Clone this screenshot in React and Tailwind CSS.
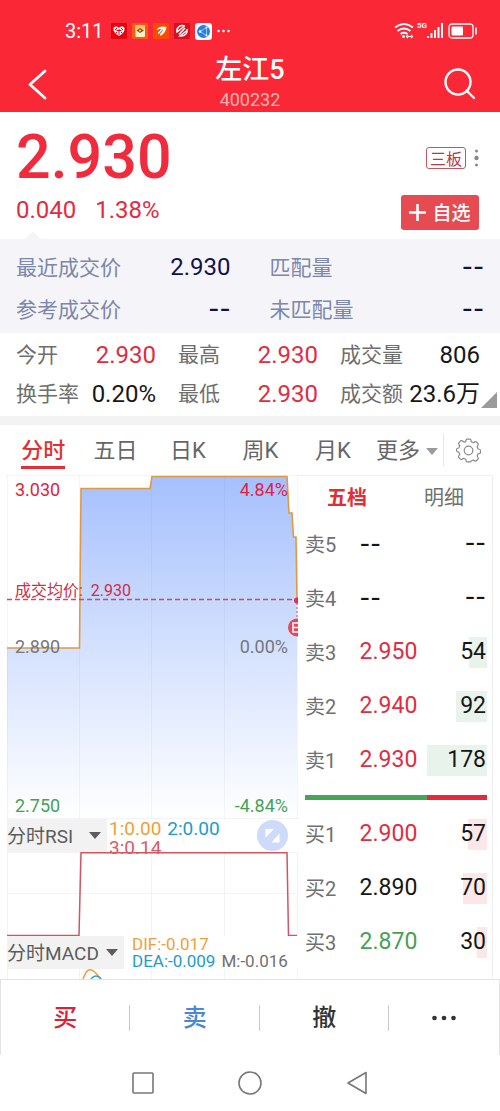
import React, { useState } from 'react';

const periods = ['分时', '五日', '日K', '周K', '月K'];

const matchStats = [
  { label: '最近成交价', value: '2.930' },
  { label: '匹配量', value: '--' },
  { label: '参考成交价', value: '--' },
  { label: '未匹配量', value: '--' },
];

const dayStats = [
  { label: '今开', value: '2.930', color: 'text-[#e02d43]' },
  { label: '最高', value: '2.930', color: 'text-[#e02d43]' },
  { label: '成交量', value: '806', color: 'text-[#161616]' },
  { label: '换手率', value: '0.20%', color: 'text-[#161616]' },
  { label: '最低', value: '2.930', color: 'text-[#e02d43]' },
  { label: '成交额', value: '23.6万', color: 'text-[#161616]' },
];

const asks = [
  { label: '卖5', price: '--', volume: 0, color: 'text-[#161616]' },
  { label: '卖4', price: '--', volume: 0, color: 'text-[#161616]' },
  { label: '卖3', price: '2.950', volume: 54, color: 'text-[#e02d43]' },
  { label: '卖2', price: '2.940', volume: 92, color: 'text-[#e02d43]' },
  { label: '卖1', price: '2.930', volume: 178, color: 'text-[#e02d43]' },
];

const bids = [
  { label: '买1', price: '2.900', volume: 57, color: 'text-[#e02d43]' },
  { label: '买2', price: '2.890', volume: 70, color: 'text-[#161616]' },
  { label: '买3', price: '2.870', volume: 30, color: 'text-[#47a058]' },
];

const MAX_VOLUME = 178;

const Value = ({ children }) =>
  children === '--' ? <span className="font-['Inter',sans-serif] font-medium">--</span> : children;

const Caret = ({ className }) => (
  <svg className={className} width="12" height="7" viewBox="0 0 12 7" aria-hidden="true">
    <path d="M0 0h12L6 7z" fill="currentColor" />
  </svg>
);

const StatusBar = () => (
  <div className="flex h-[46px] items-end justify-between pr-[22px] pl-[65px] pb-1">
    <div className="flex items-center gap-[5px]">
      <span className="mr-0.5 text-xl leading-[22px]">3:11</span>
      <svg width="16" height="16" viewBox="0 0 16 16">
        <rect width="16" height="16" rx="1" fill="#e80010" />
        <path d="M8 13C4 10.500 2 8 2.500 5.500C3 3 6 3 8 5C10 3 13 3 13.500 5.500C14 8 12 10.500 8 13z" fill="#fff" />
        <path d="M4 7l2-2M6 9l-1 1M8 6v6M10 5l2 2M5.500 7.500h5M10 9l1 1" stroke="#e80010" strokeWidth="1" />
      </svg>
      <svg width="16" height="16" viewBox="0 0 16 16">
        <rect width="16" height="16" rx="1" fill="#f75b12" />
        <rect x="3.500" y="2" width="9.500" height="12" rx="1" fill="#fff1c9" />
        <path d="M3.500 3q0-1 1-1h7.500q1 0 1 1v3l-9.500 1z" fill="#ffc568" />
        <path d="M4.500 7.500L8 5l4 2.500L8 10z" fill="#9e4318" />
        <circle cx="8" cy="7.500" r="1" fill="#ffd87c" />
      </svg>
      <svg width="16" height="16" viewBox="0 0 16 16">
        <rect width="16" height="16" rx="1" fill="#fb4b00" />
        <path d="M3 7C6 3 10 3 13.500 4C13 8 11 11 7.500 13L7 11C9 9 10 7 10 6L5.500 11.500L5 9.500L8.500 6C6.500 6 4.500 6.500 3 7z" fill="#fff" />
      </svg>
      <svg width="16" height="16" viewBox="0 0 16 16" fill="none" stroke="#fff" strokeWidth="1.500">
        <rect width="16" height="16" rx="1" fill="#d80f1d" stroke="none" />
        <path d="M11 3C6 1.500 2 5 3 9L10 3.500M13 6c1 4-2 7.500-7 7L13 7.500M5 11.500L11 5M6.500 9.500l3-2.500" />
      </svg>
      <svg width="17" height="17" viewBox="0 0 17 17">
        <rect width="17" height="17" rx="3" fill="#fff" />
        <circle cx="8.500" cy="8.500" r="6.500" fill="#277ee9" />
        <path d="M11.500 4.500L5 8.500l6.500 4M11.500 4.500v8" stroke="#8fc4ff" fill="none" />
        <circle cx="5" cy="8.500" r="1.300" fill="#fff" />
        <circle cx="11.500" cy="4.500" r="1" fill="#fff" />
        <circle cx="11.500" cy="12.500" r="1" fill="#fff" />
      </svg>
      <svg width="13" height="4" viewBox="0 0 13 4" fill="#fff">
        <circle cx="1.500" cy="2" r="1.300" />
        <circle cx="6.500" cy="2" r="1.300" />
        <circle cx="11.500" cy="2" r="1.300" />
      </svg>
    </div>
    <div className="flex h-[22px] items-center">
      <svg width="20" height="16" viewBox="0 0 20 16" fill="none" stroke="#fff" strokeWidth="1.800">
        <path d="M1 4.500Q10-2.500 19 4.500M3.500 8Q10 3 16.500 8M6.500 11Q10 8.500 13.500 11" />
        <circle cx="9.500" cy="13.500" r="1.500" fill="#fff" stroke="none" />
        <path d="M14 12l-1.500 1.500L14 15M17 12l1.500 1.500L17 15M14 13.500h3" strokeWidth="1.200" />
      </svg>
      <span className="ml-[3px] self-start text-[8px] leading-3 font-bold">5G</span>
      <svg width="17" height="16" viewBox="0 0 17 16" fill="#fff">
        <rect x="0" y="13" width="2" height="2" />
        <rect x="3.500" y="10" width="2" height="5" />
        <rect x="7" y="7" width="2" height="8" />
        <rect x="10.500" y="4" width="2" height="11" />
        <rect x="14" y="0" width="2" height="15" />
      </svg>
      <svg className="ml-1" width="30" height="16" viewBox="0 0 30 16">
        <rect x="1" y="1" width="24" height="14" rx="3" fill="none" stroke="#fff" strokeWidth="1.300" />
        <rect x="3.500" y="3.500" width="11.500" height="9" rx="1" fill="#fff" />
        <path d="M28 4.500v7" stroke="#fff" strokeWidth="1.600" />
      </svg>
    </div>
  </div>
);

const PriceChart = () => (
  <div className="relative h-[344px] overflow-hidden text-lg leading-5">
    <svg className="h-full w-full" viewBox="0 0 291 344" preserveAspectRatio="none" aria-hidden="true">
      <defs>
        <linearGradient id="area" x1="0" y1="0" x2="0" y2="344" gradientUnits="userSpaceOnUse">
          <stop offset="0" stopColor="#a5c0fd" />
          <stop offset="0.500" stopColor="#d4e1fe" />
          <stop offset="1" stopColor="#ffffff" />
        </linearGradient>
      </defs>
      <path d="M0 173H72.500L74 13.500H143L145 1.500H280L282 38H285L286.500 62H289L290 124V344H0z" fill="url(#area)" />
      <path d="M0 .5H291M.5 0V344M72.500 0V344M144.500 0V344M217.500 0V344M290.500 0V344M0 343.500H291" stroke="#6080b0" strokeOpacity="0.080" />
      <path d="M0 173H72.500L74 13.500H143L145 1.500H280L282 38H285L286.500 62H289L290 124" fill="none" stroke="#e09a45" strokeWidth="1.600" />
      <path d="M0 124.500H290" fill="none" stroke="#dc4068" strokeWidth="1.400" strokeDasharray="5 3" />
      <path d="M290 124V145" stroke="#e04a5a" strokeDasharray="2 2" />
      <circle cx="290" cy="125.500" r="3" fill="#e0304a" />
      <circle cx="290" cy="152.500" r="9" fill="#e04a5a" />
      <path d="M291 148H286V157H291M286 152.500H291" fill="none" stroke="#fff" strokeWidth="1.500" />
    </svg>
    <span className="absolute top-[5px] left-2 text-[#dc2444]">3.030</span>
    <span className="absolute top-[5px] right-2.5 text-[#dc2444]">4.84%</span>
    <span className="absolute top-[106px] left-2 text-base leading-5 text-[#cf2c45]">成交均价:&nbsp; 2.930</span>
    <span className="absolute top-[162px] left-2 text-[#74777c]">2.890</span>
    <span className="absolute top-[162px] right-2.5 text-[#74777c]">0.00%</span>
    <span className="absolute top-[321px] left-2 text-[#47a058]">2.750</span>
    <span className="absolute top-[321px] right-2.5 text-[#47a058]">-4.84%</span>
  </div>
);

const IndicatorSelect = ({ name, width, label }) => (
  <label className={`relative flex h-[33px] shrink-0 items-center bg-[#f2f2f3] text-[#5c5c5c] ${width}`}>
    <select aria-label={label} className="w-full appearance-none bg-transparent pt-0.5 text-[19px] leading-6 outline-none">
      <option>{name}</option>
    </select>
    <Caret className="pointer-events-none absolute right-1.5" />
  </label>
);

const BookTable = ({ rows, label, barColor }) => (
  <table aria-label={label} className="w-full table-fixed border-collapse">
    <tbody>
      {rows.map((row) => (
        <tr key={row.label} className="h-[54px]">
          <th scope="row" className="w-[30%] p-0 pt-0.5 text-left text-xl font-normal text-[#707070]">{row.label}</th>
          <td className={`w-[37%] p-0 text-[23px] leading-8 ${row.color}`}>
            <Value>{row.price}</Value>
          </td>
          <td className="w-[33%] p-0 text-right text-[23px] text-[#161616]">
            <div className="relative flex h-[31px] items-center justify-end pr-px">
              <div
                className={`absolute inset-y-0 right-0 ${barColor}`}
                style={{ width: `${(row.volume / MAX_VOLUME) * 100}%` }}
              />
              <span className="relative"><Value>{row.volume ? String(row.volume) : '--'}</Value></span>
            </div>
          </td>
        </tr>
      ))}
    </tbody>
  </table>
);

const App = () => {
  const [period, setPeriod] = useState('分时');

  return (
    <div className="min-h-screen bg-white font-['Roboto','Noto_Sans_CJK_SC',sans-serif] text-[#161616]">
      {/* Header */}
      <header className="bg-[#fa2836] text-white">
        <StatusBar />
        <div className="flex h-[66px] items-center justify-between px-6">
          <button aria-label="返回" className="flex w-9 pt-2.5 pl-1">
            <svg width="20" height="32" viewBox="0 0 20 32" fill="none" stroke="#fff" strokeWidth="2.800" strokeLinecap="round" strokeLinejoin="round">
              <path d="M17 3L2 16.500L17 30" />
            </svg>
          </button>
          <div className="pt-1.5 text-center">
            <h1 className="text-[27px] leading-9 font-medium">左江5</h1>
            <p className="text-lg leading-6 text-[#ffb3b3]">400232</p>
          </div>
          <button aria-label="搜索" className="flex w-9 justify-end pt-2.5">
            <svg width="32" height="32" viewBox="0 0 32 32" fill="none" stroke="#fff" strokeWidth="2.400" strokeLinecap="round">
              <circle cx="14" cy="14" r="12.500" />
              <path d="M22.500 22.500L30 30" />
            </svg>
          </button>
        </div>
      </header>

      {/* Last price */}
      <section className="relative flex h-[127px] justify-between pr-[21px] pl-4">
        <div className="text-[#e32b40]">
          <p className="pt-3 text-[61px] leading-[66px] font-medium text-[#f02b3d]">2.930</p>
          <p className="flex gap-[19px] pt-1 text-2xl leading-8">
            <span>0.040</span>
            <span>1.38%</span>
          </p>
        </div>
        <div className="flex flex-col items-end justify-between pt-[35px] pb-[9px]">
          <div className="flex items-center gap-2">
            <span className="rounded-[3px] border border-[#c45662] px-[3px] font-['Noto_Sans_CJK_SC',sans-serif] text-base leading-5 text-[#bf3542]">三板</span>
            <svg width="5" height="20" viewBox="0 0 5 20" fill="#888">
              <circle cx="2.500" cy="3" r="1.500" />
              <circle cx="2.500" cy="10" r="2.200" />
              <circle cx="2.500" cy="17" r="1.500" />
            </svg>
          </div>
          <button className="flex h-[35px] w-[78px] items-center justify-center gap-1.5 rounded-[3px] bg-[#e54b50] font-['Noto_Sans_CJK_SC',sans-serif] text-[19px] font-medium text-white">
            <svg width="17" height="17" viewBox="0 0 17 17" stroke="#fff" strokeWidth="2.600">
              <path d="M0 8.500h17M8.500 0v17" />
            </svg>
            自选
          </button>
        </div>
        <svg className="absolute bottom-0 left-[25px]" width="16" height="8" viewBox="0 0 16 8">
          <path d="M0 8L8 0l8 8z" fill="#f5f5f9" />
        </svg>
      </section>

      <dl className="grid grid-cols-2 gap-x-[39px] bg-[#f5f5f9] pt-[7px] pr-4 pb-[3px] pl-4">
        {matchStats.map((stat) => (
          <div key={stat.label} className="flex h-[42px] items-center justify-between">
            <dt className="pt-1 text-[21px] text-[#7d86ab]">{stat.label}</dt>
            <dd className="text-2xl text-[#12124a]"><Value>{stat.value}</Value></dd>
          </div>
        ))}
      </dl>

      <section className="relative border-b-[9px] border-[#f3f3f3] pt-0.5 pb-[3px]">
        <dl className="grid grid-cols-3 gap-x-[22px] pr-5 pl-4">
          {dayStats.map((stat) => (
            <div key={stat.label} className="flex h-[39px] items-center justify-between whitespace-nowrap">
              <dt className="pt-0.5 text-[21px] text-[#6e6e6e]">{stat.label}</dt>
              <dd className={`text-2xl ${stat.color}`}>{stat.value}</dd>
            </div>
          ))}
        </dl>
        <button aria-label="展开" className="absolute right-[3px] bottom-2">
          <svg width="16" height="16" viewBox="0 0 16 16">
            <path d="M16 0v16H0z" fill="#9b9b9b" />
          </svg>
        </button>
      </section>

      {/* Period tabs */}
      <nav className="flex h-[50px] items-center px-[7px] text-[22px] leading-7 text-[#666]">
        {periods.map((name) => (
          <button key={name} onClick={() => setPeriod(name)} className="flex flex-1 justify-center pt-0.5">
            <span className={name === period ? 'border-b-[3px] border-[#e03034] pt-1 pb-px font-medium text-[#e03034]' : ''}>
              {name}
            </span>
          </button>
        ))}
        <button className="flex w-[74px] items-center justify-end gap-1.5 pt-0.5 pr-[5px]">
          更多
          <Caret className="text-[#9b9b9b]" />
        </button>
        <button aria-label="设置" className="flex h-8 w-[50px] items-center justify-center border-l border-[#e8e8e8]">
          <svg width="25" height="25" viewBox="0 0 25 25" fill="none" stroke="#8a8a8a" strokeWidth="1.200" strokeLinejoin="round">
            <path d="M9.800 3.800Q10 1.200 11 1.200h3q1 0 1.200 2.600l2.200 1q2-1.700 3-1l1.700 2q.7 1-1 3l1 2.200q2.400.2 2.400 1.200v2.400q0 1-2.400 1.200l-1 2.300q1.700 2 1 2.900l-1.900 2q-.9.700-2.900-1l-2.100 1Q15 23.800 14 23.800h-3q-1 0-1.200-2.500l-2.200-1q-2 1.700-3 1l-1.800-2q-.7-.9 1-2.900l-1-2.300Q.6 13.800.6 12.800v-1.600q0-1 2.200-1.200l1-2.200q-1.700-2-1-3l1.800-2q1-.7 3 1z" />
            <circle cx="12.500" cy="12.500" r="4.300" />
          </svg>
        </button>
      </nav>

      <main className="grid grid-cols-[291fr_195fr] px-[7px]">
        {/* Charts */}
        <div className="min-w-0 overflow-hidden">
          <PriceChart />

          <div className="relative flex h-[33px] justify-between">
            <IndicatorSelect name="分时RSI" label="副图一指标" width="w-[100px]" />
            <p className="relative z-10 ml-0.5 flex h-[38px] flex-1 flex-wrap gap-x-1.5 text-[19px] leading-[19px]">
              <span className="text-[#efa038]">1:0.00</span>
              <span className="text-[#229ccc]">2:0.00</span>
              <span className="text-[#dd5a66]">3:0.14</span>
            </p>
            <button aria-label="全屏" className="mr-2.5 self-center">
              <svg width="31" height="31" viewBox="0 0 31 31">
                <circle cx="15.500" cy="15.500" r="15.500" fill="#cddafa" />
                <path d="M8.500 9h8.500l-8.500 8.500zM22.500 22.500h-8l8-9z" fill="#fff" />
              </svg>
            </button>
          </div>
          <svg className="h-[84px] w-full" viewBox="0 0 291 84" preserveAspectRatio="none" aria-hidden="true">
            <path d="M0 .5H291M0 41.500H291M.5 0V84M72.500 0V84M144.500 0V84M217.500 0V84M290.500 0V84" fill="none" stroke="#f3f3f5" />
            <path d="M0 83.500H72L74 .8H280L281.500 83.500H290" fill="none" stroke="#cf5560" strokeWidth="1.500" />
          </svg>

          <div className="flex h-[33px]">
            <IndicatorSelect name="分时MACD" label="副图二指标" width="w-[117px]" />
            <p className="ml-2 flex flex-1 flex-wrap gap-x-1.5 text-[17px] leading-[17px] whitespace-nowrap">
              <span className="w-full text-[#efa038]">DIF:-0.017</span>
              <span className="text-[#229ccc]">DEA:-0.009</span>
              <span className="text-[#707070]">M:-0.016</span>
            </p>
          </div>
          <svg className="h-[10px] w-full" viewBox="0 0 291 10" preserveAspectRatio="none" aria-hidden="true">
            <path d="M.5 0V10M72.500 0V10M144.500 0V10M217.500 0V10M290.500 0V10" stroke="#f3f3f5" />
            <path d="M76 10C79 3 80 .8 83 .8S88 3 94 10" fill="none" stroke="#e9a23c" strokeWidth="1.500" />
            <path d="M84 10Q89 4 94 10" fill="none" stroke="#35a0b8" strokeWidth="1.500" />
          </svg>
        </div>

        {/* Order book */}
        <div className="border-t border-r border-[#f0f0f0] pr-[5px] pl-[7px]">
          <div className="flex h-[41px] items-center justify-between pt-0.5 pr-[23px] pl-[22px] text-xl">
            <button className="font-bold text-[#e02d36]">五档</button>
            <button className="text-[#707070]">明细</button>
          </div>
          <BookTable rows={asks} label="卖盘" barColor="bg-[#e8f3eb]" />
          <div className="flex h-5 items-center">
            <div className="h-[5px] w-[67%] bg-[#47a557]" />
            <div className="h-[5px] flex-1 bg-[#e32a3d]" />
          </div>
          <BookTable rows={bids} label="买盘" barColor="bg-[#fce7e8]" />
        </div>
      </main>

      {/* Trade actions */}
      <div className="grid h-[76px] grid-cols-[13fr_13fr_13fr_11fr] items-center border border-b-0 border-[#e3e3e3] text-2xl leading-[26px] font-medium">
        <button className="border-r border-[#c8c8c8] text-[#dc2038]">买</button>
        <button className="border-r border-[#c8c8c8] text-[#4a87d6]">卖</button>
        <button className="border-r border-[#c8c8c8] text-[#333]">撤</button>
        <button aria-label="更多操作" className="flex justify-center">
          <svg width="24" height="6" viewBox="0 0 24 6" fill="#333">
            <circle cx="2.500" cy="3" r="2.300" />
            <circle cx="12" cy="3" r="2.300" />
            <circle cx="21.500" cy="3" r="2.300" />
          </svg>
        </button>
      </div>

      {/* System navigation */}
      <div className="flex h-14 items-center justify-center gap-[83px]">
        <button aria-label="最近任务">
          <svg width="24" height="24" viewBox="0 0 24 24" fill="none" stroke="#777" strokeWidth="1.600">
            <rect x="2" y="2" width="20" height="20" rx="1" />
          </svg>
        </button>
        <button aria-label="主屏幕">
          <svg width="24" height="24" viewBox="0 0 24 24" fill="none" stroke="#777" strokeWidth="1.600">
            <circle cx="12" cy="12" r="11" />
          </svg>
        </button>
        <button aria-label="后退">
          <svg width="24" height="24" viewBox="0 0 24 24" fill="none" stroke="#777" strokeWidth="1.600" strokeLinejoin="round">
            <path d="M21 1.500v21L3 12z" />
          </svg>
        </button>
      </div>
    </div>
  );
};

export default App;
